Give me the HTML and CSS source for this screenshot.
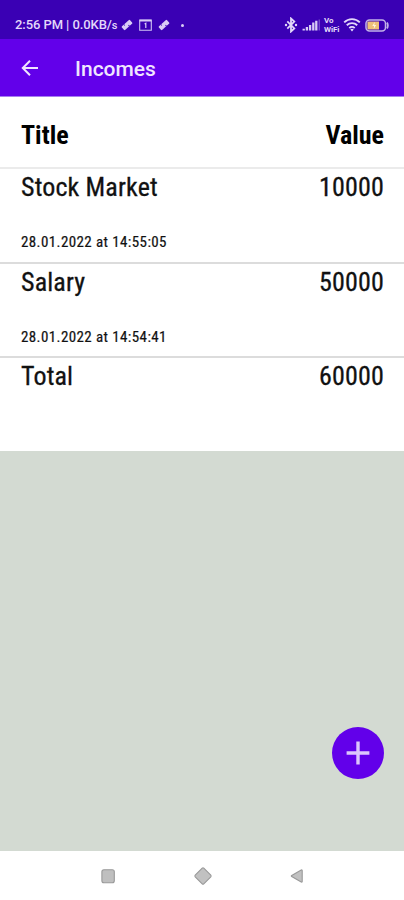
FILE: index.html
```html
<!DOCTYPE html>
<html lang="en">
<head>
<meta charset="utf-8">
<meta name="viewport" content="width=device-width, initial-scale=1">
<title>Incomes</title>
<link rel="stylesheet" href="styles.css">
</head>
<body>
<div class="screen">
  <header class="status">
    <div class="status-left">
      <span class="clock">2:56 PM | 0.0KB/<small>s</small></span>
      <svg class="tag" width="12" height="12" viewBox="0 0 12 12"><g transform="rotate(-42 6 6)"><rect x="0.5" y="3.5" width="11" height="5" rx="1" fill="#d9ccf6"/><path d="M4 3.5v1.4M7 7.1v1.4" stroke="#3a00b4" stroke-width="1"/></g></svg>
      <svg class="cal" width="13" height="12" viewBox="0 0 13 12"><path d="M.7 1h11.6v10.3H.7z" fill="none" stroke="#d0c2f4" stroke-width="1.1"/><path d="M.7 1.6h11.6" stroke="#d9ccf6" stroke-width="1.8"/><path d="M5.6 5l1.2-.7v4.6" fill="none" stroke="#d9ccf6" stroke-width="1.2"/></svg>
      <svg class="tag" width="12" height="12" viewBox="0 0 12 12"><g transform="rotate(-42 6 6)"><rect x="0.5" y="3.5" width="11" height="5" rx="1" fill="#d9ccf6"/><path d="M4 3.5v1.4M7 7.1v1.4" stroke="#3a00b4" stroke-width="1"/></g></svg>
      <i class="dot"></i>
    </div>
    <div class="status-right">
      <svg class="bt" width="14" height="16" viewBox="0 0 14 16"><path d="M3.3 4.4l7 7L7 14.5v-13l3.3 3.1-7 7" fill="none" stroke="#e3d8fa" stroke-width="1.8"/><circle cx="2" cy="8" r="1.2" fill="#e3d8fa"/><circle cx="12" cy="8" r="1.2" fill="#e3d8fa"/></svg>
      <svg class="signal" width="18" height="12" viewBox="0 0 18 12"><path d="M1.7 11.5V9.8M4.9 11.5V8M8.1 11.5V6M11.3 11.5V3.5M14.3 11.5V1.8" stroke="#d9ccf6" stroke-width="2.3"/><path d="M17.2 11.5V.5" stroke="#8c66d8" stroke-width="1"/></svg>
      <span class="vowifi"><b>Vo</b><b>WiFi</b></span>
      <svg class="wifi" width="18" height="14" viewBox="0 0 18 14"><path d="M1.2 4.4a11 11 0 0 1 15.6 0M3.8 7.3a7.4 7.4 0 0 1 10.4 0M6.3 10.1a3.9 3.9 0 0 1 5.4 0" fill="none" stroke="#e3d8fa" stroke-width="1.9"/><path d="M9 13.6l-1.7-2a2.5 2.5 0 0 1 3.4 0z" fill="#e3d8fa"/></svg>
      <svg class="battery" width="24" height="13" viewBox="0 0 24 13"><rect x="1" y="1" width="19.5" height="11" rx="3.5" fill="none" stroke="#c2b2e8" stroke-width="1.5"/><path d="M22 3.5q1.7 3 0 6" fill="none" stroke="#c2b2e8" stroke-width="1.8"/><path d="M3.5 2.4H14v8.2H3.5Q2.4 10.6 2.4 9.4V3.6Q2.4 2.4 3.5 2.4z" fill="#edc078"/><path d="M9.8 2.8L7.3 7h1.8l-.5 3.2L11.2 6H9.3z" fill="#fff3da"/></svg>
    </div>
  </header>
  <div class="appbar">
    <svg width="18" height="18" viewBox="0 0 18 18"><path d="M17 9H2M9 1.8L1.8 9 9 16.2" fill="none" stroke="#f0e6ff" stroke-width="2"/></svg>
    <h1>Incomes</h1>
  </div>
  <main>
    <div class="head"><span>Title</span><span>Value</span></div>
    <div class="row">
      <div class="line"><span>Stock Market</span><span>10000</span></div>
      <time>28.01.2022 at 14:55:05</time>
    </div>
    <div class="row">
      <div class="line"><span>Salary</span><span>50000</span></div>
      <time>28.01.2022 at 14:54:41</time>
    </div>
    <div class="row total">
      <div class="line"><span>Total</span><span>60000</span></div>
    </div>
  </main>
  <div class="space">
    <button class="fab" aria-label="Add"><svg width="24" height="24" viewBox="0 0 24 24"><path d="M12 .6v22.8M.6 12h22.8" stroke="#dcc6fc" stroke-width="3.4"/></svg></button>
  </div>
  <nav>
    <svg width="16" height="16" viewBox="0 0 16 16"><rect x="1.9" y="1.7" width="12.4" height="13" rx="2" fill="#bfbfbf" stroke="#999" stroke-width="1.1"/></svg>
    <svg width="20" height="20" viewBox="0 0 20 20"><path d="M9.2 2.2q.8-.7 1.6 0l7 7q.7.8 0 1.6l-7 7q-.8.7-1.6 0l-7-7q-.7-.8 0-1.6z" fill="#c1c1c1" stroke="#999" stroke-width="1.1"/></svg>
    <svg width="16" height="16" viewBox="0 0 16 16"><path d="M2.7 7.4L12.2 2q1-.4 1 .6v10.8q0 1-1 .6L2.7 8.6q-.8-.6 0-1.2z" fill="#c1c1c1" stroke="#999" stroke-width="1.1"/></svg>
  </nav>
</div>
</body>
</html>
```
FILE: styles.css
```css
* { box-sizing: border-box; }
body { margin: 0; font-family: Roboto, sans-serif; color: #111; background: #fff; }
.screen { display: flex; flex-direction: column; width: 404px; height: 900px; }
.status { display: flex; justify-content: space-between; height: 39px; padding: 10px 15px 0 15px; background: #3a00b4; color: #e3d8fa; }
.status-left, .status-right { display: flex; align-items: center; height: 30px; }
.clock { width: 106px; font: 500 13px/30px Roboto, sans-serif; white-space: nowrap; letter-spacing: -0.08px; }
.clock small { font-size: 11px; }
.cal { margin: 0 6px 0 6px; }
.dot { width: 3px; height: 3px; margin-left: 11px; border-radius: 50%; background: #d9ccf6; }
.vowifi { display: flex; flex-direction: column; width: 17px; margin: 0 2px 0 4px; }
.vowifi b { height: 9px; font: 700 8px/9px Roboto, sans-serif; letter-spacing: -0.1px; }
.bt { margin-right: 4px; }
.battery { margin-left: 4px; }
.appbar { display: flex; align-items: center; height: 58px; padding: 0 21px; background: #6200ea; color: #f0e6ff; border-bottom: 1px solid #a67df0; }
.appbar h1 { margin: 3px 0 0 36px; font: 500 21px/28px Roboto, sans-serif; }
.head, .line { display: flex; justify-content: space-between; padding: 0 20px 0 21px; font-stretch: 75%; }
.head { height: 72px; padding-top: 18px; border-bottom: 2px solid #ebebeb; font-size: 26px; line-height: 40px; font-weight: 700; color: #000; }
.row { height: 95px; border-bottom: 2px solid #dcdcdc; }
.row + .row { height: 94px; }
.line { font-size: 26px; line-height: 36px; font-weight: 400; letter-spacing: 0.15px; -webkit-text-stroke: 0.3px #111; }
.row time { display: block; margin-top: 27px; padding-left: 21px; font-size: 15px; line-height: 20px; font-weight: 400; font-stretch: 75%; letter-spacing: 0.4px; -webkit-text-stroke: 0.2px #111; }
.row.total { height: 93px; border: 0; }
.space { display: flex; flex: 1; align-items: flex-end; justify-content: flex-end; padding: 0 20px 72px 0; background: #d3dad2; }
.fab { display: flex; align-items: center; justify-content: center; width: 52px; height: 52px; padding: 0; border: 0; border-radius: 50%; background: #6200ea; }
nav { display: flex; justify-content: space-between; align-items: center; height: 49px; padding: 0 99px 0 100px; background: #fff; }
```
